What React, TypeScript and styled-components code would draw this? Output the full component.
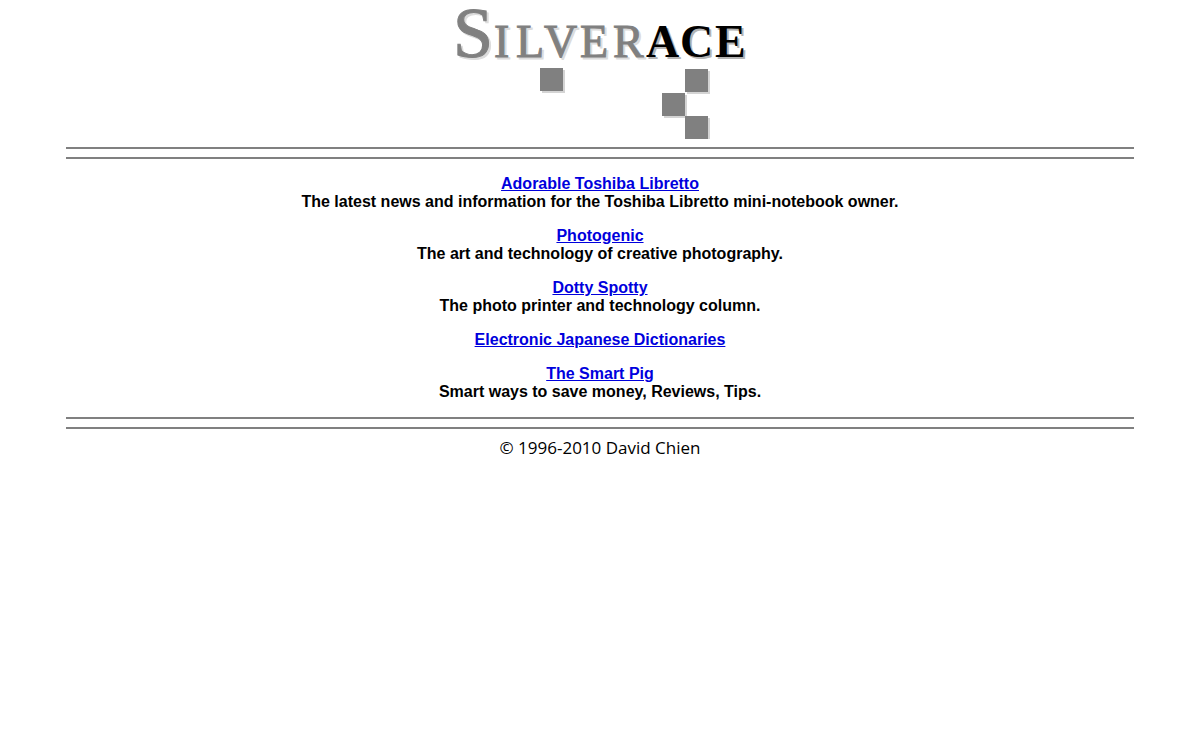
import React from "react";
import styled, { createGlobalStyle } from "styled-components";

const GlobalStyle = createGlobalStyle`
  body {
    margin: 0;
    background: #ffffff;
    color: #000000;
  }
`;

const Page = styled.div`
  display: flex;
  flex-direction: column;
  align-items: center;
  padding: 8px 0;
`;

const Logo = styled.svg`
  display: block;
  width: 292px;
  height: 131px;
  overflow: visible;
`;

const Wordmark = styled.g`
  font-family: "Liberation Serif", "Times New Roman", serif;
  font-size: 46px;
`;

const Initial = styled.tspan`
  font-size: 72px;
`;

const DoubleRule = styled.hr`
  box-sizing: border-box;
  width: 89%;
  height: 12px;
  margin: 8px 0 0;
  border: solid #808080;
  border-width: 2px 0;
`;

const SiteList = styled.main`
  display: flex;
  flex-direction: column;
  gap: 16px;
  padding: 16px 0 8px;
  font: bold 16px/18px "Liberation Sans", Arial, sans-serif;
  text-align: center;
`;

const Site = styled.section``;

const SiteLink = styled.a`
  color: #0000dd;
  text-decoration: underline;
`;

const Description = styled.div``;

const Footer = styled.footer`
  margin-top: 8px;
  font: 17px/22px "Open Sans", "Segoe UI", sans-serif;
`;

const sites = [
  {
    name: "Adorable Toshiba Libretto",
    description: "The latest news and information for the Toshiba Libretto mini-notebook owner.",
  },
  { name: "Photogenic", description: "The art and technology of creative photography." },
  { name: "Dotty Spotty", description: "The photo printer and technology column." },
  { name: "Electronic Japanese Dictionaries" },
  { name: "The Smart Pig", description: "Smart ways to save money, Reviews, Tips." },
];

const LOGO_HEIGHT = 131;
const SQUARE = 23;

const squares = [
  [86, 60],
  [231, 61],
  [208, 85],
  [231, 108],
];

function Letters({ silver, ace }: { silver: string; ace: string }) {
  return (
    <>
      <text y="49" x="-1 40 62 90 126 159" fill={silver} stroke={silver}>
        <Initial>S</Initial>ILVER
      </text>
      <text y="49" x="192 226 261" fill={ace} fontWeight="bold">
        ACE
      </text>
    </>
  );
}

export default function App() {
  return (
    <>
      <GlobalStyle />
      <Page>
        <Logo viewBox={`0 0 292 ${LOGO_HEIGHT}`} role="img" aria-label="Silverace">
          <Wordmark>
            <g transform="translate(2 2)" aria-hidden="true">
              <Letters silver="#dcdcdc" ace="#b4b4b4" />
            </g>
            <Letters silver="#808080" ace="#000000" />
          </Wordmark>
          {squares.map(([x, y]) => (
            <rect
              key={`shade-${x}-${y}`}
              x={x + 2}
              y={y + 2}
              width={SQUARE}
              height={Math.min(SQUARE, LOGO_HEIGHT - y - 2)}
              fill="#d4d4d4"
            />
          ))}
          {squares.map(([x, y]) => (
            <rect key={`${x}-${y}`} x={x} y={y} width={SQUARE} height={SQUARE} fill="#808080" />
          ))}
        </Logo>
        <DoubleRule />
        <SiteList>
          {sites.map((site) => (
            <Site key={site.name}>
              <SiteLink href="#">{site.name}</SiteLink>
              {site.description && <Description>{site.description}</Description>}
            </Site>
          ))}
        </SiteList>
        <DoubleRule />
        <Footer>© 1996-2010 David Chien</Footer>
      </Page>
    </>
  );
}
